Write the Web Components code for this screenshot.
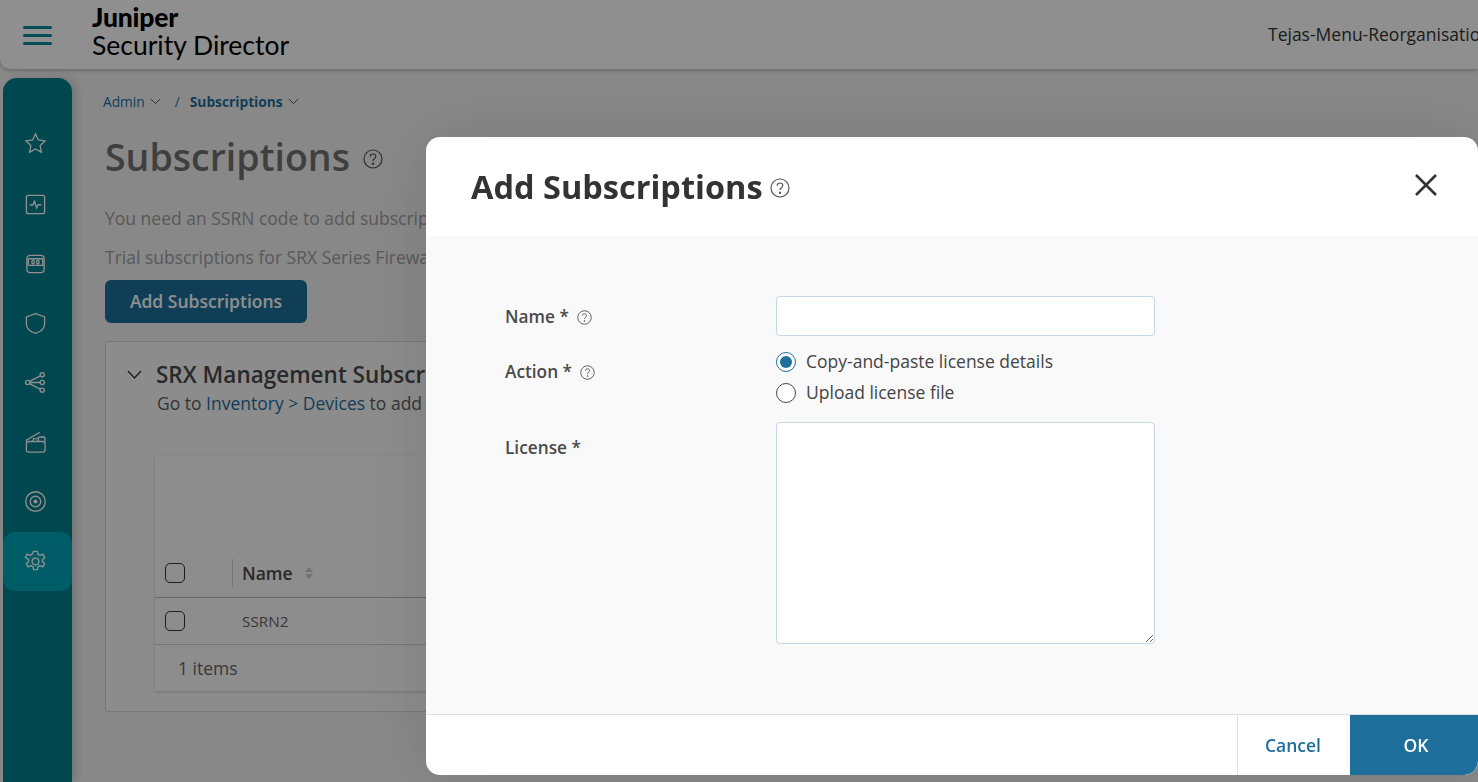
<!DOCTYPE html>
<html>
<head>
<meta charset="utf-8">
<title>Subscriptions</title>
<style>
  html, body { margin: 0; height: 100%; overflow: hidden; }
  body { background: #f3f3f3; font-family: "Open Sans", sans-serif; }
</style>
</head>
<body>
<sd-shell>
  <sd-header slot="header" org="Tejas-Menu-Reorganisation"></sd-header>
  <sd-sidebar slot="side"></sd-sidebar>
  <sd-subscriptions-page slot="main"></sd-subscriptions-page>
</sd-shell>
<sd-modal heading="Add Subscriptions">
  <sd-field label="Name *" help><sd-input></sd-input></sd-field>
  <sd-field label="Action *" help low style="margin-bottom: 14px">
    <sd-radio checked>Copy-and-paste license details</sd-radio>
    <sd-radio>Upload license file</sd-radio>
  </sd-field>
  <sd-field label="License *" low><sd-textarea></sd-textarea></sd-field>
</sd-modal>

<script>
class Shell extends HTMLElement {
  constructor() {
    super();
    this.attachShadow({mode: 'open'}).innerHTML = `
      <style>
        :host { display: block; height: 782px; overflow: hidden; }
        .body { display: flex; height: 713px; padding-top: 0; }
      </style>
      <slot name="header"></slot>
      <div class="body">
        <slot name="side"></slot>
        <slot name="main"></slot>
      </div>
    `;
  }
}
customElements.define('sd-shell', Shell);

class Header extends HTMLElement {
  connectedCallback() {
    this.attachShadow({mode: 'open'}).innerHTML = `
      <style>
        :host {
          display: flex;
          align-items: center;
          height: 69px;
          background: #fff;
          border-radius: 0 0 0 10px;
          box-shadow: 0 1px 4px rgba(0, 0, 0, 0.3);
          position: relative;
          z-index: 1;
        }
        .burger { display: flex; flex-direction: column; gap: 5px; margin: 0 40px 0 23px; padding-top: 1px; }
        .burger i { display: block; width: 29px; height: 3px; border-radius: 2px; background: #0a8a9a; }
        .logo { font-family: Lato, sans-serif; font-size: 26.500px; line-height: 28px; color: #000; padding-bottom: 8px; }
        .logo b { display: block; font-weight: 900; letter-spacing: -0.2px; }
        .org { margin-left: auto; font-size: 17.500px; color: #333; white-space: nowrap; width: 210px; overflow: hidden; padding-bottom: 1px; }
      </style>
      <div class="burger"><i></i><i></i><i></i></div>
      <div class="logo"><b>Juniper</b>Security Director</div>
      <div class="org">${this.getAttribute('org')}</div>
    `;
  }
}
customElements.define('sd-header', Header);

const navIcons = [
  '<path d="M12 .9l3 6.400 6.900 1-5 4.800 1.200 6.900-6.100-3.300-6.100 3.300 1.200-6.900-5-4.800 6.900-1z"/>',
  '<rect x="2.500" y="2.500" width="19" height="19" rx="2"/><path d="M6 12.500h3.200l1.800-4 2.200 7 1.600-3.200H18"/>',
  '<rect x="3" y="3.500" width="18" height="18" rx="3.500"/><rect x="4.500" y="7" width="15" height="7" rx=".5"/><ellipse cx="9.500" cy="10.500" rx="1.300" ry="2"/><ellipse cx="14.500" cy="10.500" rx="1.300" ry="2"/>',
  '<path d="M12 1.800l9.500 3.400v7.500c0 4.800-4.200 7.800-9.500 9.500-5.300-1.700-9.500-4.700-9.500-9.500V5.200z"/>',
  '<circle cx="3.800" cy="12" r="2.200"/><circle cx="19" cy="12" r="2.200"/><circle cx="19" cy="4" r="2.200"/><circle cx="19" cy="20" r="2.200"/><path d="M6 12h10.800M5.700 10.900L17 5M5.700 13.100L17 19"/>',
  '<rect x="2.500" y="11" width="19.500" height="11" rx="2.500"/><path d="M2.500 11V9.500L16.500 1.300"/><path d="M9 11l1-3h4M15 11V6.500l4-.5c1.500 0 3 1 3 2.500V11"/>',
  '<circle cx="12" cy="12" r="10.200"/><circle cx="12" cy="12" r="5.500"/><circle cx="12" cy="12" r="1.500" fill="currentColor"/>',
  '<circle cx="12" cy="12" r="3.500"/><path d="M10 1.500h4l.7 3.100 2.100 1 2.900-1.300 2 3.400-2.400 2.100v2.400l2.400 2.100-2 3.400-2.900-1.300-2.100 1-.7 3.100h-4l-.7-3.100-2.100-1-2.900 1.300-2-3.400 2.400-2.100v-2.400L1.300 7.700l2-3.400 2.900 1.300 2.100-1z" stroke-linejoin="round"/>'
];

class Sidebar extends HTMLElement {
  connectedCallback() {
    let items = '';
    navIcons.forEach((icon, i) => {
      items += `
        <div class="item ${i === 7 ? 'active' : ''}">
          <svg width="23" height="23" viewBox="0 0 24 24" fill="none" stroke="currentColor" stroke-width="1.400">${icon}</svg>
        </div>
      `;
    });
    this.attachShadow({mode: 'open'}).innerHTML = `
      <style>
        :host {
          display: block;
          flex: none;
          width: 69px;
          margin: 9px 0 0 3px;
          padding-top: 37px;
          height: 667px;
          background: #007f8d;
          border-radius: 14px 14px 0 0;
          box-shadow: 4px 0 10px rgba(0, 0, 0, 0.15);
          color: #fff;
        }
        .item {
          display: flex;
          align-items: center;
          justify-content: center;
          height: 59.500px;
          padding-right: 4px;
          box-sizing: border-box;
        }
        .active { background: #00a5b6; border-radius: 12px; }
      </style>
      ${items}
    `;
  }
}
customElements.define('sd-sidebar', Sidebar);

class HelpIcon extends HTMLElement {
  connectedCallback() {
    const size = this.getAttribute('size') || 16;
    this.attachShadow({mode: 'open'}).innerHTML = `
      <style>
        :host { display: inline-flex; color: #555; }
      </style>
      <svg width="${size}" height="${size}" viewBox="0 0 20 20" fill="none" stroke="currentColor" stroke-width="1.200">
        <circle cx="10" cy="10" r="9"/>
        <path d="M7.200 7.700c0-1.600 1.200-2.700 2.800-2.700s2.800 1 2.800 2.500c0 2.200-2.800 2.200-2.800 4.500"/>
        <circle cx="10" cy="14.700" r=".6" fill="currentColor"/>
      </svg>
    `;
  }
}
customElements.define('sd-help', HelpIcon);

const chevron = '<svg width="11" height="7" viewBox="0 0 11 7" fill="none" stroke="currentColor" stroke-width="1"><path d="M.8 1l4.700 4.500L10.200 1"/></svg>';

class SubscriptionsPage extends HTMLElement {
  connectedCallback() {
    this.attachShadow({mode: 'open'}).innerHTML = `
      <style>
        :host { display: block; flex: 1; min-width: 0; padding: 0 0 0 33px; color: #999; }
        .crumbs { display: flex; align-items: center; height: 18px; margin: 23px 0 0 -2px; font-size: 13.750px; color: #1f6f9c; white-space: nowrap; }
        .crumbs svg { margin: 1px 0 0 5px; color: #555; }
        .crumbs .sep { margin: 0 10px 0 14px; }
        .crumbs b { font-weight: 700; }
        h1 { display: flex; align-items: center; margin: 24px 0 0; font-size: 37.500px; line-height: 46px; font-weight: 600; color: #707070; }
        h1 sd-help { margin: 3px 0 0 13px; }
        p { margin: 0; font-size: 17.500px; line-height: 22px; white-space: nowrap; color: #9f9f9f; }
        .p1 { margin-top: 27px; }
        .p2 { margin-top: 17px; }
        .btn {
          display: flex; align-items: center; justify-content: center;
          width: 202px; height: 43px; margin-top: 12px; padding-bottom: 2px;
          background: #1f6f9c; border-radius: 6px;
          font-size: 17.500px; font-weight: 600; color: #fff; box-sizing: border-box;
        }
      </style>
      <div class="crumbs">Admin ${chevron}<span class="sep">/</span><b>Subscriptions</b> ${chevron}</div>
      <h1>Subscriptions <sd-help size="20"></sd-help></h1>
      <p class="p1">You need an SSRN code to add subscriptions</p>
      <p class="p2">Trial subscriptions for SRX Series Firewalls</p>
      <div class="btn">Add Subscriptions</div>
      <sd-card heading="SRX Management Subscriptions">
        Go to <a>Inventory</a> <a>&gt;</a> <a>Devices</a> to add
      </sd-card>
    `;
  }
}
customElements.define('sd-subscriptions-page', SubscriptionsPage);

class Card extends HTMLElement {
  connectedCallback() {
    this.attachShadow({mode: 'open'}).innerHTML = `
      <style>
        :host {
          display: block;
          width: 1300px;
          height: 371px;
          margin-top: 18px;
          border: 1px solid #d5d5d5;
          background: #fafafa;
          box-sizing: border-box;
          border-radius: 2px;
          padding: 19px 0 0 21px;
        }
        .top { display: flex; }
        .top svg { margin: 9px 14px 0 0; color: #333; }
        h2 { margin: 0; font-size: 22.500px; line-height: 28px; font-weight: 600; color: #4a4a4a; white-space: nowrap; }
        .sub { font-size: 17.500px; line-height: 22px; color: #5c5c5c; margin: 3px 0 0 1px; white-space: nowrap; }
        ::slotted(a) { color: #1f6f9c; }
      </style>
      <div class="top">
        <svg width="15" height="9" viewBox="0 0 15 9" fill="none" stroke="currentColor" stroke-width="1.300"><path d="M1 1l6.500 7L14 1"/></svg>
        <div>
          <h2>${this.getAttribute('heading')}</h2>
          <div class="sub"><slot></slot></div>
        </div>
      </div>
      <sd-table></sd-table>
    `;
  }
}
customElements.define('sd-card', Card);

class Table extends HTMLElement {
  connectedCallback() {
    this.attachShadow({mode: 'open'}).innerHTML = `
      <style>
        :host {
          display: block;
          width: 1100px;
          margin: 42px 0 0 28px;
          background: #fbfbfb;
          box-shadow: 0 1px 3px rgba(0, 0, 0, 0.18);
          color: #444;
          font-size: 15.300px;
        }
        .tools { height: 92px; }
        .row { display: flex; align-items: center; box-sizing: border-box; border-bottom: 1px solid #b8b8b8; }
        .head { height: 50px; font-size: 17.500px; font-weight: 600; color: #4a4a4a; }
        .item { height: 47px; border-bottom-color: #d0d0d0; }
        .box { width: 20px; height: 20px; box-sizing: border-box; border: 1px solid #333; border-radius: 5px; margin: 0 0 0 10px; flex: none; }
        .div { width: 1px; height: 28px; background: #cfcfcf; margin-left: 47px; }
        .name { margin-left: 9px; }
        .item .name { margin-left: 57px; color: #666; }
        .sort { margin: 0 0 0 12px; display: flex; flex-direction: column; gap: 2px; }
        .sort i { display: block; width: 0; height: 0; border-left: 4px solid transparent; border-right: 4px solid transparent; }
        .sort i:first-child { border-bottom: 5px solid #ccc; }
        .sort i:last-child { border-top: 5px solid #ccc; }
        .foot { height: 46px; display: flex; align-items: center; padding-left: 23px; font-size: 17.500px; color: #666; }
      </style>
      <div class="tools"></div>
      <div class="row head">
        <span class="box"></span><span class="div"></span>
        <span class="name">Name</span>
        <span class="sort"><i></i><i></i></span>
      </div>
      <div class="row item"><span class="box"></span><span class="name">SSRN2</span></div>
      <div class="foot">1 items</div>
    `;
  }
}
customElements.define('sd-table', Table);

class Modal extends HTMLElement {
  connectedCallback() {
    this.attachShadow({mode: 'open'}).innerHTML = `
      <style>
        :host {
          position: fixed;
          inset: 0;
          background: rgba(0, 0, 0, 0.44);
          font-family: "Open Sans", sans-serif;
          z-index: 10;
        }
        .dialog {
          position: absolute;
          left: 426px;
          top: 137px;
          width: 1052px;
          height: 638px;
          display: flex;
          flex-direction: column;
          background: #fff;
          border-radius: 14px;
          overflow: hidden;
          box-shadow: 0 0 70px rgba(0, 0, 0, 0.12);
        }
        header { display: flex; align-items: center; flex: none; height: 99px; padding: 0 40px 0 45px; }
        h1 { margin: 0; font-size: 32.500px; font-weight: 700; color: #333; line-height: 40px; }
        header sd-help { margin: 3px 0 0 7px; }
        .close { margin: -4px 0 0 auto; display: flex; }
        .content { flex: 1; background: #f9f9f9; padding: 60px 0 0 79px; }
        footer { display: flex; flex: none; height: 61px; border-top: 1px solid #dcdfe3; box-sizing: border-box; justify-content: flex-end; }
        .btn { display: flex; align-items: center; justify-content: center; font-size: 17.500px; font-weight: 600; }
        .cancel { width: 112px; box-sizing: content-box; color: #1f6f9c; border-left: 1px solid #dcdfe3; padding-bottom: 1px; text-indent: -2px; }
        .ok { width: 128px; box-sizing: border-box; padding: 0 0 1px 4px; background: #1f6f9c; color: #fff; border-bottom-right-radius: 14px; }
      </style>
      <div class="dialog">
        <header>
          <h1>${this.getAttribute('heading')}</h1>
          <sd-help size="20"></sd-help>
          <span class="close">
            <svg width="24" height="24" viewBox="0 0 24 24" fill="none" stroke="#333" stroke-width="2.600"><path d="M2 2l20 20M22 2L2 22"/></svg>
          </span>
        </header>
        <div class="content"><slot></slot></div>
        <footer>
          <div class="btn cancel">Cancel</div>
          <div class="btn ok">OK</div>
        </footer>
      </div>
    `;
  }
}
customElements.define('sd-modal', Modal);

class Field extends HTMLElement {
  connectedCallback() {
    const help = this.hasAttribute('help') ? '<sd-help size="15"></sd-help>' : '';
    this.attachShadow({mode: 'open'}).innerHTML = `
      <style>
        :host { display: grid; grid-template-columns: 271px 379px; margin-bottom: 10px; color: #4a4a4a; }
        .label { display: flex; align-items: center; height: 40px; font-size: 17.250px; font-weight: 600; gap: 8px; white-space: nowrap; }
        :host([low]) .label { margin-top: 5px; }
        sd-help { margin-top: 2px; }
        .ctl { display: flex; flex-direction: column; }
      </style>
      <div class="label">${this.getAttribute('label')}${help}</div>
      <div class="ctl"><slot></slot></div>
    `;
  }
}
customElements.define('sd-field', Field);

class Input extends HTMLElement {
  connectedCallback() {
    this.attachShadow({mode: 'open'}).innerHTML = `
      <style>
        :host { display: block; }
        input { display: block; width: 100%; height: 40px; box-sizing: border-box; border: 1px solid #c8d5e3; border-radius: 4px; background: #fff; outline: none; }
      </style>
      <input type="text">
    `;
  }
}
customElements.define('sd-input', Input);

class Textarea extends HTMLElement {
  connectedCallback() {
    this.attachShadow({mode: 'open'}).innerHTML = `
      <style>
        :host { display: block; }
        textarea { display: block; width: 100%; height: 222px; box-sizing: border-box; border: 1px solid #c8d5e3; border-radius: 4px; background: #fff; outline: none; }
      </style>
      <textarea></textarea>
    `;
  }
}
customElements.define('sd-textarea', Textarea);

class Radio extends HTMLElement {
  connectedCallback() {
    this.attachShadow({mode: 'open'}).innerHTML = `
      <style>
        :host { display: flex; align-items: center; height: 31px; gap: 10px; font-size: 17.500px; color: #444; white-space: nowrap; }
        .dot { display: flex; align-items: center; justify-content: center; width: 20px; height: 20px; box-sizing: border-box; border: 1px solid #3d4a5c; border-radius: 50%; background: #fff; flex: none; }
        :host([checked]) .dot { border-color: #1f6f9c; }
        :host([checked]) .dot::after { content: ''; width: 12px; height: 12px; border-radius: 50%; background: #1f6f9c; }
        .text { margin-top: -2px; }
      </style>
      <span class="dot"></span><span class="text"><slot></slot></span>
    `;
  }
}
customElements.define('sd-radio', Radio);
</script>
</body>
</html>
